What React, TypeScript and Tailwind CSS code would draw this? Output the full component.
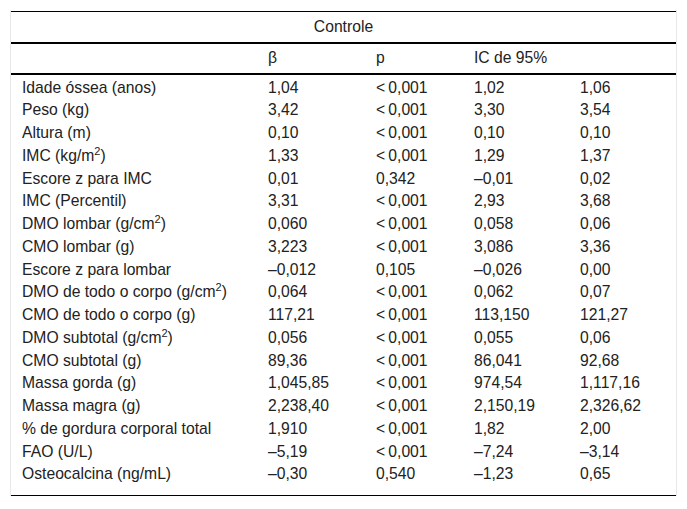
const Sup = () => <sup className="relative -top-[6px] align-baseline text-[11px] leading-none">2</sup>;

const rows: [React.ReactNode, string, string, string, string][] = [
  ["Idade óssea (anos)", "1,04", "< 0,001", "1,02", "1,06"],
  ["Peso (kg)", "3,42", "< 0,001", "3,30", "3,54"],
  ["Altura (m)", "0,10", "< 0,001", "0,10", "0,10"],
  [<>IMC (kg/m<Sup />)</>, "1,33", "< 0,001", "1,29", "1,37"],
  ["Escore z para IMC", "0,01", "0,342", "–0,01", "0,02"],
  ["IMC (Percentil)", "3,31", "< 0,001", "2,93", "3,68"],
  [<>DMO lombar (g/cm<Sup />)</>, "0,060", "< 0,001", "0,058", "0,06"],
  ["CMO lombar (g)", "3,223", "< 0,001", "3,086", "3,36"],
  ["Escore z para lombar", "–0,012", "0,105", "–0,026", "0,00"],
  [<>DMO de todo o corpo (g/cm<Sup />)</>, "0,064", "< 0,001", "0,062", "0,07"],
  ["CMO de todo o corpo (g)", "117,21", "< 0,001", "113,150", "121,27"],
  [<>DMO subtotal (g/cm<Sup />)</>, "0,056", "< 0,001", "0,055", "0,06"],
  ["CMO subtotal (g)", "89,36", "< 0,001", "86,041", "92,68"],
  ["Massa gorda (g)", "1,045,85", "< 0,001", "974,54", "1,117,16"],
  ["Massa magra (g)", "2,238,40", "< 0,001", "2,150,19", "2,326,62"],
  ["% de gordura corporal total", "1,910", "< 0,001", "1,82", "2,00"],
  ["FAO (U/L)", "–5,19", "< 0,001", "–7,24", "–3,14"],
  ["Osteocalcina (ng/mL)", "–0,30", "0,540", "–1,23", "0,65"],
];

export default function App() {
  return (
    <div className="w-[687px] h-[509px] bg-white pt-[10px] pl-[10px] font-['Liberation_Sans'] text-[15.7px] text-[#222]">
      <div className="w-[667px] border-x border-[#e8e8e8] pt-px">
        <table className="w-[665px] table-fixed border-collapse font-['Liberation_Sans']">
          <colgroup>
            <col className="w-[246px]" />
            <col className="w-[108px]" />
            <col className="w-[98px]" />
            <col className="w-[106px]" />
            <col className="w-[107px]" />
          </colgroup>
          <thead>
            <tr className="border-t border-black border-b-2">
              <th colSpan={5} className="h-[31px] p-0 font-normal text-center">
                Controle
              </th>
            </tr>
            <tr className="border-b-2 border-black">
              <th className="h-[31px] p-0" />
              <th className="h-[31px] p-0 pl-[11px] font-normal text-left">β</th>
              <th className="h-[31px] p-0 pl-[11px] font-normal text-left">p</th>
              <th className="h-[31px] p-0 pl-[11px] font-normal text-left">IC de 95%</th>
              <th className="h-[31px] p-0" />
            </tr>
          </thead>
          <tbody className="border-b border-black">
            {rows.map(([label, b, p, lo, hi], i) => {
              const pad = i === 0 ? "pt-[2px]" : i === rows.length - 1 ? "pb-[9px]" : "";
              return (
                <tr key={i}>
                  <td className={`pl-[11px] leading-[22.75px] whitespace-nowrap ${pad}`}>{label}</td>
                  <td className={`pl-[11px] leading-[22.75px] ${pad}`}>{b}</td>
                  <td className={`pl-[11px] leading-[22.75px] ${pad}`}>
                    {p.startsWith("<") ? <>&lt;{"\u2009"}{p.slice(2)}</> : p}
                  </td>
                  <td className={`pl-[11px] leading-[22.75px] ${pad}`}>{lo}</td>
                  <td className={`pl-[11px] leading-[22.75px] ${pad}`}>{hi}</td>
                </tr>
              );
            })}
          </tbody>
        </table>
      </div>
    </div>
  );
}
